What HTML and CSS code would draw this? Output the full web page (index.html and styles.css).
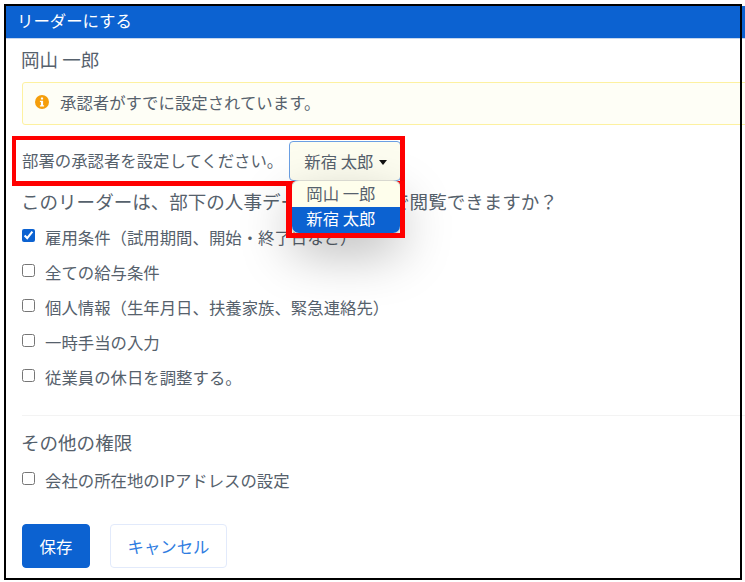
FILE: index.html
```html
<!DOCTYPE html>
<html lang="ja">
<head>
<meta charset="utf-8">
<title>リーダーにする</title>
<link rel="stylesheet" href="styles.css">
</head>
<body>
<div class="page">
  <header class="bar">リーダーにする</header>
  <main class="content">
    <h2 class="name">岡山 一郎</h2>
    <div class="alert">
      <svg class="alert-icon" viewBox="0 0 14 14" width="14" height="14" aria-hidden="true">
        <circle cx="7" cy="7" r="7" fill="#f59e0b"/>
        <rect x="5.9" y="2.4" width="2.2" height="2.2" rx="0.5" fill="#fff"/>
        <path d="M4.9 5.7h3.2v4.5h1v1.4H4.9v-1.4h1V7.1h-1z" fill="#fff"/>
      </svg>
      <span>承認者がすでに設定されています。</span>
    </div>
    <div class="approver">
      <span class="approver-label">部署の承認者を設定してください。</span>
      <div class="dropdown">
        <button class="toggle" type="button">新宿 太郎<span class="caret"></span></button>
        <ul class="menu">
          <li class="item">岡山 一郎</li>
          <li class="item active">新宿 太郎</li>
        </ul>
      </div>
    </div>
    <h3 class="heading">このリーダーは、部下の人事データをどこまで閲覧できますか？</h3>
    <ul class="checks first">
      <li class="check"><input type="checkbox" checked><span>雇用条件（試用期間、開始・終了日など）</span></li>
      <li class="check"><input type="checkbox"><span>全ての給与条件</span></li>
      <li class="check"><input type="checkbox"><span>個人情報（生年月日、扶養家族、緊急連絡先）</span></li>
      <li class="check"><input type="checkbox"><span>一時手当の入力</span></li>
      <li class="check"><input type="checkbox"><span>従業員の休日を調整する。</span></li>
    </ul>
    <hr class="rule">
    <h3 class="heading other">その他の権限</h3>
    <ul class="checks second">
      <li class="check"><input type="checkbox"><span>会社の所在地のIPアドレスの設定</span></li>
    </ul>
    <div class="actions">
      <button class="btn primary" type="button">保存</button>
      <button class="btn ghost" type="button">キャンセル</button>
    </div>
  </main>
</div>
<div class="frame"></div>
<div class="mark mark-a"></div>
<div class="mark mark-b"></div>
</body>
</html>
```
FILE: styles.css
```css
* { box-sizing: border-box; }
html, body { margin: 0; height: 582px; overflow: hidden; background: #fff; }
body {
  padding: 6px 0 0 6px;
  font-family: "Noto Sans CJK JP", "Noto Sans", sans-serif;
  font-size: 16.4px;
  color: #56616c;
}
.page { width: 739px; overflow: hidden; }
.bar {
  height: 33px;
  padding-left: 11px;
  line-height: 29px;
  background: #0c62d1;
  border-bottom: 1px solid #c5d6ee;
  color: #fff;
  font-size: 16.4px;
}
.content { padding: 8px 0 0 16px; }
.name, .heading {
  margin: 0 0 0 -1px;
  font-size: 18.55px;
  font-weight: 400;
  line-height: 26px;
}
.name { line-height: 24px; }
.alert {
  display: flex;
  align-items: center;
  gap: 11px;
  width: 760px;
  height: 43px;
  margin-top: 11px;
  padding: 0 0 3px 12px;
  background: #fefef6;
  border: 1px solid #fdf1a0;
  border-radius: 3px;
}
.alert-icon { flex: none; }
.approver {
  display: flex;
  align-items: center;
  gap: 6px;
  height: 40px;
  margin-top: 16px;
}
.approver-label { padding-bottom: 2px; }
.dropdown { position: relative; }
.toggle {
  display: flex;
  align-items: center;
  width: 112px;
  height: 40px;
  padding: 0 0 0 14px;
  background: #fdfdf0;
  border: 1px solid #6b9fe3;
  border-radius: 4px;
  color: #56616c;
  font: inherit;
}
.caret {
  margin: 2px 0 0 5px;
  border-top: 5px solid #111;
  border-left: 4px solid transparent;
  border-right: 4px solid transparent;
}
.menu {
  position: absolute;
  top: 40px;
  left: 3px;
  width: 108px;
  height: 52px;
  margin: 0;
  padding: 0;
  list-style: none;
  overflow: hidden;
  background: #fefeec;
  border-radius: 7px;
  box-shadow: 0 0 0 1px #d8d8d0, 0 20px 52px rgba(0, 0, 0, 0.28);
  z-index: 2;
}
.item {
  height: 26px;
  padding-left: 14px;
  line-height: 24px;
}
.item.active {
  height: 26px;
  background: #0c62d1;
  color: #fff;
  line-height: 23px;
}
.heading { margin-top: 7px; }
.checks { margin: 0; padding: 0; list-style: none; }
.checks.first { margin-top: 5px; }
.checks.second { margin-top: 7px; }
.check {
  display: flex;
  align-items: center;
  height: 35px;
}
.check input {
  width: 13px;
  height: 13px;
  margin: -2px 10px 0 0;
  accent-color: #0c62d1;
}
.rule {
  margin: 21px 0 0;
  border: 0;
  border-top: 1px solid #f3f3f3;
}
.other { margin-top: 13px; }
.actions {
  display: flex;
  gap: 20px;
  margin-top: 27px;
}
.btn {
  height: 44px;
  border-radius: 4px;
  font: inherit;
}
.primary {
  width: 68px;
  background: #0c62d1;
  border: 1px solid #0c62d1;
  color: #fff;
}
.ghost {
  width: 117px;
  background: #fff;
  border: 1px solid #e2eafb;
  color: #2f7de1;
}
.frame {
  position: absolute;
  left: 4px;
  top: 4px;
  width: 738px;
  height: 576px;
  border: 2px solid #000;
  pointer-events: none;
  z-index: 3;
}
.mark {
  position: absolute;
  pointer-events: none;
  border: 4px solid #f00;
}
.mark-a {
  z-index: 1;
  left: 12px;
  top: 136px;
  width: 393px;
  height: 50px;
  border-right-width: 5px;
  border-bottom-width: 5px;
}
.mark-b {
  z-index: 4;
  left: 286px;
  top: 181px;
  width: 119px;
  height: 57px;
  border-top: 0;
  border-left-width: 6px;
  border-right-width: 5px;
  border-bottom-width: 5px;
}
```
